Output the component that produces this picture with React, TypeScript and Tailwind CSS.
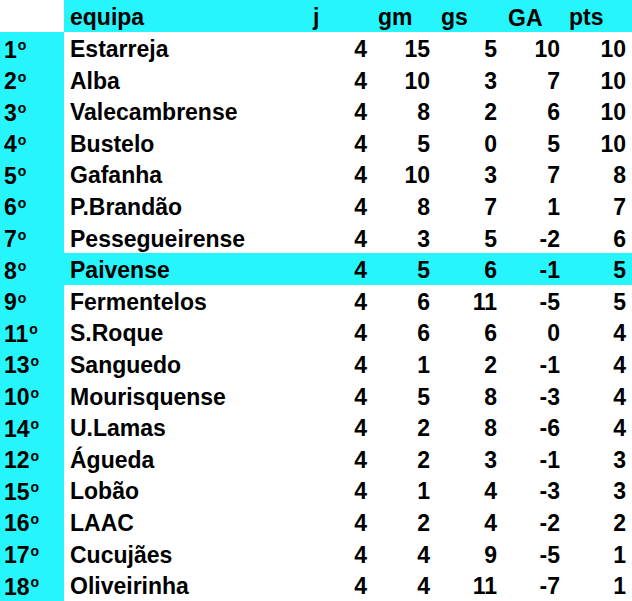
type Row = { pos: number; team: string; j: number; gm: number; gs: number; ga: number; pts: number; hl?: boolean };

const rows: Row[] = [
  { pos: 1, team: "Estarreja", j: 4, gm: 15, gs: 5, ga: 10, pts: 10 },
  { pos: 2, team: "Alba", j: 4, gm: 10, gs: 3, ga: 7, pts: 10 },
  { pos: 3, team: "Valecambrense", j: 4, gm: 8, gs: 2, ga: 6, pts: 10 },
  { pos: 4, team: "Bustelo", j: 4, gm: 5, gs: 0, ga: 5, pts: 10 },
  { pos: 5, team: "Gafanha", j: 4, gm: 10, gs: 3, ga: 7, pts: 8 },
  { pos: 6, team: "P.Brandão", j: 4, gm: 8, gs: 7, ga: 1, pts: 7 },
  { pos: 7, team: "Pessegueirense", j: 4, gm: 3, gs: 5, ga: -2, pts: 6 },
  { pos: 8, team: "Paivense", j: 4, gm: 5, gs: 6, ga: -1, pts: 5, hl: true },
  { pos: 9, team: "Fermentelos", j: 4, gm: 6, gs: 11, ga: -5, pts: 5 },
  { pos: 11, team: "S.Roque", j: 4, gm: 6, gs: 6, ga: 0, pts: 4 },
  { pos: 13, team: "Sanguedo", j: 4, gm: 1, gs: 2, ga: -1, pts: 4 },
  { pos: 10, team: "Mourisquense", j: 4, gm: 5, gs: 8, ga: -3, pts: 4 },
  { pos: 14, team: "U.Lamas", j: 4, gm: 2, gs: 8, ga: -6, pts: 4 },
  { pos: 12, team: "Águeda", j: 4, gm: 2, gs: 3, ga: -1, pts: 3 },
  { pos: 15, team: "Lobão", j: 4, gm: 1, gs: 4, ga: -3, pts: 3 },
  { pos: 16, team: "LAAC", j: 4, gm: 2, gs: 4, ga: -2, pts: 2 },
  { pos: 17, team: "Cucujães", j: 4, gm: 4, gs: 9, ga: -5, pts: 1 },
  { pos: 18, team: "Oliveirinha", j: 4, gm: 4, gs: 11, ga: -7, pts: 1 },
];

const cols = "grid grid-cols-[64px_244px_65px_63px_67px_63px_66px]";

export default function App() {
  return (
    <div
      className="w-[632px] h-[601px] bg-white text-black font-bold text-[23px] overflow-hidden"
      style={{ fontFamily: '"Liberation Sans", Arial, sans-serif' }}
    >
      {/* cabeçalho */}
      <div className={`${cols} h-[32px]`}>
        <div className="bg-white" />
        <div className="bg-[#26f5fc] border-b border-black pl-[6px] flex items-center">equipa</div>
        <div className="bg-[#26f5fc] border-b border-black pl-[5px] flex items-center">j</div>
        <div className="bg-[#26f5fc] border-b border-black pl-[5px] flex items-center">gm</div>
        <div className="bg-[#26f5fc] border-b border-black pl-[5px] flex items-center">gs</div>
        <div className="bg-[#26f5fc] pl-[5px] flex items-center">GA</div>
        <div className="bg-[#26f5fc] border-b border-black pl-[3px] flex items-center">pts</div>
      </div>

      {rows.map((r) => {
        const bg = r.hl ? "bg-[#26f5fc]" : "bg-white";
        const num = `${bg} border-b border-black flex items-center justify-end pr-[6px]`;
        return (
          <div key={r.team} className={`${cols} h-[31.6px]`}>
            <div className="bg-[#26f5fc] flex items-center pl-[4px]">
              {r.pos}
              <span className="text-[14px] leading-none self-start mt-[6px] ml-[1px]">o</span>
            </div>
            <div className={`${bg} border-b border-black flex items-center pl-[6px]`}>{r.team}</div>
            <div className={num}>{r.j}</div>
            <div className={num}>{r.gm}</div>
            <div className={num}>{r.gs}</div>
            <div className={num}>{r.ga}</div>
            <div className={num}>{r.pts}</div>
          </div>
        );
      })}
    </div>
  );
}
